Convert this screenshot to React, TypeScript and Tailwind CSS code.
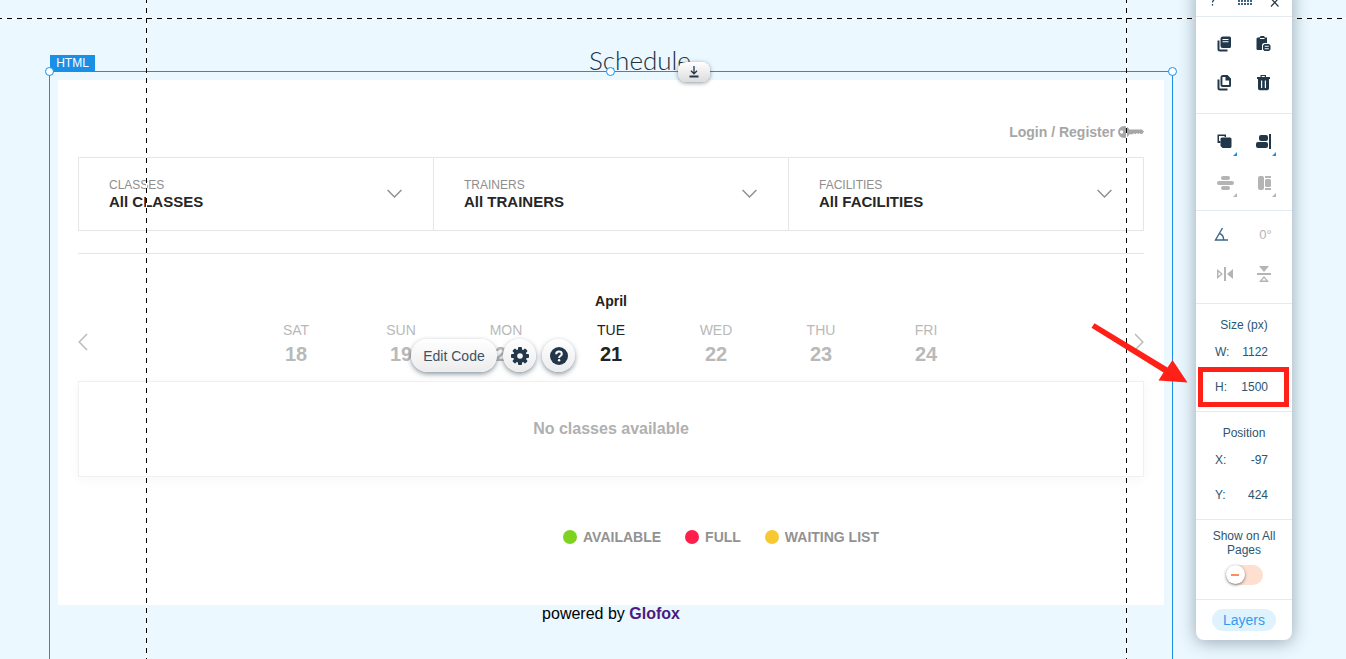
import { useState, type ReactNode } from 'react'

const DAYS = [
  { name: 'SAT', date: 18 },
  { name: 'SUN', date: 19 },
  { name: 'MON', date: 20 },
  { name: 'TUE', date: 21 },
  { name: 'WED', date: 22 },
  { name: 'THU', date: 23 },
  { name: 'FRI', date: 24 },
]

const FILTERS = [
  { id: 'classes', label: 'CLASSES', value: 'All CLASSES' },
  { id: 'trainers', label: 'TRAINERS', value: 'All TRAINERS' },
  { id: 'facilities', label: 'FACILITIES', value: 'All FACILITIES' },
]

const LEGEND = [
  { label: 'AVAILABLE', dot: 'bg-[#7ed321]' },
  { label: 'FULL', dot: 'bg-[#ff1f4b]' },
  { label: 'WAITING LIST', dot: 'bg-[#f8c833]' },
]

function Filter({ id, label, value }: { id: string; label: string; value: string }) {
  return (
    <div className="flex flex-1 items-center border-r border-[#e6e6e6] pl-[30px] pr-[31px] last:border-r-0">
      <div className="flex-1">
        <label htmlFor={id} className="block text-xs leading-4 text-[#8e8e8e]">
          {label}
        </label>
        <select id={id} className="block w-full appearance-none bg-transparent text-[15px] leading-[18px] font-bold text-[#262626]">
          <option>{value}</option>
        </select>
      </div>
      <svg width="15" height="11" viewBox="0 0 15 11" fill="none" stroke="#8e8e8e" strokeWidth="1.4">
        <path d="M.6 1l6.9 7 6.9-7" />
      </svg>
    </div>
  )
}

function Schedule() {
  return (
    <section className="bg-white px-5 pt-[42px] pb-[58px]">
      <a href="#login" className="flex items-center justify-end gap-[3px] text-sm leading-5 font-bold text-[#a6a6a6]">
        Login / Register
        <svg width="26" height="12" viewBox="0 0 26 12" fill="#a6a6a6">
          <path
            fillRule="evenodd"
            d="M6 0c2.400 0 4.400 1.200 5.300 3.500H24L26 5.800 24 8h-1.500l-1-1-1.200 1-1.500-1-1.300 1.200L16 7.200 14.700 8.300h-3.400C10.400 10.700 8.400 12 6 12a6 6 0 0 1 0-12zM3.600 4.300a1.700 1.700 0 1 0 0 3.400 1.700 1.700 0 0 0 0-3.400z"
          />
        </svg>
      </a>

      <div className="mt-[15px] flex h-[74px] border border-[#e6e6e6]">
        {FILTERS.map((f) => (
          <Filter key={f.id} {...f} />
        ))}
      </div>

      <div className="mt-[22px] border-t border-[#e6e6e6] pt-[37px]">
        <h2 className="text-center text-sm leading-5 font-bold text-[#222]">April</h2>
        <div className="mt-[7px] flex items-center justify-between">
          <button type="button" aria-label="Previous week">
            <svg width="10" height="18" viewBox="0 0 10 18" fill="none" stroke="#bdbdbd" strokeWidth="1.6">
              <path d="M9 1L1.200 9 9 17" />
            </svg>
          </button>
          <div className="grid w-[735px] grid-cols-7">
            {DAYS.map((day) => (
              <button
                key={day.name}
                type="button"
                className={day.date === 21 ? 'text-[#222]' : 'text-[#b9b9b9]'}
              >
                <span className="block text-sm leading-6">{day.name}</span>
                <span className="block text-xl leading-6 font-bold">{day.date}</span>
              </button>
            ))}
          </div>
          <button type="button" aria-label="Next week">
            <svg width="10" height="18" viewBox="0 0 10 18" fill="none" stroke="#bdbdbd" strokeWidth="1.6">
              <path d="M1 1l7.800 8L1 17" />
            </svg>
          </button>
        </div>
      </div>

      <p className="mt-[15px] border border-[#f0f0f0] py-[35px] text-center leading-6 font-bold text-[#b0b0b0] shadow-[0_2px_12px_rgba(0,0,0,0.04)]">
        No classes available
      </p>

      <ul className="mt-[50px] flex justify-center gap-6 pl-[220px] text-sm leading-5 font-bold text-[#929292]">
        {LEGEND.map((item) => (
          <li key={item.label} className="flex items-center gap-1.5">
            <span className={`size-3.5 rounded-full ${item.dot}`} />
            {item.label}
          </li>
        ))}
      </ul>
    </section>
  )
}

function FloatingTools() {
  const look =
    'flex h-[33px] items-center justify-center rounded-full bg-linear-to-b from-white to-[#ececec] shadow-[0_2px_5px_rgba(22,45,61,0.5)]'
  return (
    <div className="absolute top-[267px] left-1/2 -ml-[200px] flex gap-1.5 text-[#22384a]">
      <button type="button" className={`${look} w-[86px] text-sm text-[#3f5263]`}>
        Edit Code
      </button>
      <button type="button" aria-label="Settings" className={`${look} w-[33px]`}>
        <svg width="18" height="18" viewBox="-9 -9 18 18" fill="currentColor">
          {[0, 45, 90, 135].map((a) => (
            <rect key={a} x="-2" y="-9" width="4" height="18" rx="1" transform={`rotate(${a})`} />
          ))}
          <circle r="6.800" />
          <circle r="2.800" fill="#f6f6f6" />
        </svg>
      </button>
      <button type="button" aria-label="Help" className={`${look} w-[33px]`}>
        <svg width="18" height="18" viewBox="0 0 18 18" fill="none">
          <circle cx="9" cy="9" r="9" fill="currentColor" />
          <path d="M6.200 7.200C6.200 5.400 7.400 4.500 9 4.500s2.800 1 2.800 2.400c0 1.900-2.700 1.900-2.700 4" stroke="#fff" strokeWidth="2" />
          <circle cx="9.100" cy="13.300" r="1.200" fill="#fff" />
        </svg>
      </button>
    </div>
  )
}

function Handle({ place }: { place: string }) {
  return <span className={`absolute -top-[5px] size-[9px] rounded-full border border-[#1a8fe6] bg-white ${place}`} />
}

function IconButton({ label, children, size, muted, corner }: {
  label: string
  children: ReactNode
  size: string
  muted?: boolean
  corner?: boolean
}) {
  return (
    <button
      type="button"
      aria-label={label}
      className={`relative flex items-center justify-center ${size} ${muted ? 'text-[#b4b4b4]' : 'text-[#22384a]'}`}
    >
      <svg width="18" height="18" viewBox="0 0 18 18" fill="currentColor">
        {children}
      </svg>
      {corner && (
        <svg
          className={`absolute right-[7px] bottom-1.5 ${muted ? 'text-[#b4b4b4]' : 'text-[#1a8fe6]'}`}
          width="4"
          height="4"
          viewBox="0 0 4 4"
          fill="currentColor"
        >
          <path d="M4 0v4H0z" />
        </svg>
      )}
    </button>
  )
}

function Field({ id, label, value, marked }: { id: string; label: string; value: string; marked?: boolean }) {
  return (
    <div className="relative flex h-[35px] items-center justify-between pr-6 pl-[19px]">
      <label htmlFor={id}>{label}</label>
      <input id={id} defaultValue={value} className="w-9 bg-transparent text-right outline-none" />
      {marked && (
        <>
          <span className="pointer-events-none absolute -top-0.5 right-[3px] -bottom-[3px] left-0.5 border-[5px] border-[#ff2018]" />
          <svg
            className="pointer-events-none absolute right-full bottom-5 mr-2"
            width="97"
            height="62"
            viewBox="0 0 97 62"
            fill="#ff2018"
          >
            <path d="M3.500 1.200L.5 5.800 72.500 50.500 67.500 58.500l29 2L81.500 38 76.500 45.500z" />
          </svg>
        </>
      )}
    </div>
  )
}

function Toolbar() {
  const [allPages, setAllPages] = useState(false)
  const group = 'border-t border-[#e4ebf0]'
  return (
    <aside className="relative z-10 -mt-4 mr-[54px] w-24 shrink-0 self-start rounded-b-lg bg-white text-xs text-[#2b5672] shadow-[0_2px_18px_rgba(22,45,61,0.4)]">
      <header className="flex h-8 items-center justify-between px-3">
        <button type="button" aria-label="Help" className="text-[#22384a]">
          <svg width="9" height="12" viewBox="0 0 9 12" fill="none" stroke="currentColor" strokeWidth="1.200">
            <path d="M1.500 3.500C1.500 1.500 3 .8 4.500.8s3 .9 3 2.600c0 2-3 2.400-3 5" />
            <path d="M4.500 10v1.600" />
          </svg>
        </button>
        <svg width="14" height="10" viewBox="0 0 14 10" fill="#3b6787" className="ml-1">
          {[2, 5, 8].map((y) =>
            [0, 3, 6, 9, 12].map((x) => <rect key={`${x}-${y}`} x={x} y={y} width="2" height="2" />)
          )}
        </svg>
        <button type="button" aria-label="Close" className="text-[#22384a]">
          <svg width="11" height="13" viewBox="0 0 11 13" fill="none" stroke="currentColor" strokeWidth="1.200">
            <path d="M2 4.500l7.500 8M9.500 4.500L2 12.500" />
          </svg>
        </button>
      </header>

      <div className={`${group} grid grid-cols-2 px-[9px] pt-[7px] pb-[11px]`}>
        <IconButton label="Copy" size="h-[39px]">
          <path d="M1.500 5.500h2V14.500h8v2H4A2.500 2.500 0 0 1 1.500 14z" />
          <path fillRule="evenodd" d="M7 1.500h6.500A1.500 1.500 0 0 1 15 3v8.500A1.500 1.500 0 0 1 13.500 13H6.500A2 2 0 0 1 4.500 11V4A2.500 2.500 0 0 1 7 1.500zM6.500 4v1h6V4zm0 2.200v1h6v-1z" />
        </IconButton>
        <IconButton label="Paste" size="h-[39px]">
          <path fillRule="evenodd" d="M2.500 2.500h2l1-1.500h3.500l1 1.500h2V8H9.500A2.500 2.500 0 0 0 7 10.500v4.500H2.500A1.200 1.200 0 0 1 1.500 14V3.500zM5 3v1h4.500V3z" />
          <path fillRule="evenodd" d="M9.500 9h4.500l1.500 1.500v4L14 16H9.500L8 14.500v-4zm.2 1.800v1h4.100v-1zm0 2.400v1h4.100v-1z" />
        </IconButton>
        <IconButton label="Duplicate" size="h-[39px]">
          <path d="M1.500 5.500h2V14.500h8v2H4A2.500 2.500 0 0 1 1.500 14z" />
          <path fillRule="evenodd" d="M7 1h4.500L15 4.500v7A1.500 1.500 0 0 1 13.500 13h-7A2 2 0 0 1 4.500 11V3.500A2.500 2.500 0 0 1 7 1zm-.6 2v8h6.700V6.500H9.500V3z" />
        </IconButton>
        <IconButton label="Delete" size="h-[39px]">
          <path fillRule="evenodd" d="M5.500 1h5.500v2h4v2H2V3h3.500zm1.200 1v1h3.100V2zM3 5h11v9.500a1.800 1.800 0 0 1-1.800 1.800H4.800A1.800 1.800 0 0 1 3 14.500zm3 1.500v7.500h1.200V6.500zm3.800 0v7.500H11V6.500z" />
        </IconButton>
      </div>

      <div className={`${group} grid grid-cols-2 px-[9px] py-[7px]`}>
        <IconButton label="Arrange" size="h-[41px]" corner>
          <path fillRule="evenodd" d="M1.500 1.500h8.500V4H8.500V3H3v5h1.500v2h-3z" />
          <path d="M6 4.500h8A1.500 1.500 0 0 1 15.500 6v7.500A1.500 1.500 0 0 1 14 15H6.500L4.500 13V6A1.500 1.500 0 0 1 6 4.500z" />
        </IconButton>
        <IconButton label="Align" size="h-[41px]" corner>
          <rect x="14" y="1" width="2" height="15" />
          <rect x="4" y="2" width="9" height="6" rx="2" />
          <rect x="1" y="9" width="12" height="6" rx="2" />
        </IconButton>
        <IconButton label="Distribute" size="h-[41px]" muted corner>
          <rect x="5" y="2" width="9" height="4" rx="2" />
          <rect x="1" y="7" width="17" height="4" rx="2" />
          <rect x="5" y="12" width="9" height="4" rx="2" />
        </IconButton>
        <IconButton label="Match size" size="h-[41px]" muted corner>
          <rect x="3" y="2" width="6" height="14" rx="2" />
          <rect x="10" y="2" width="6" height="2" />
          <rect x="10" y="5" width="6" height="8" rx="1.500" />
          <rect x="10" y="14" width="6" height="2" />
        </IconButton>
      </div>

      <div className={`${group} grid grid-cols-2 px-[9px] pt-[3px] pb-[9px]`}>
        <label htmlFor="angle" className="flex h-10 items-center justify-center text-[#3b6787]">
          <svg width="18" height="18" viewBox="0 0 18 18" fill="none" stroke="currentColor" strokeWidth="1.400" className="mr-2" aria-label="Angle">
            <path d="M10.500 3L3.500 15H16M7.300 8.500c2.800.9 4.400 3.300 4.400 6.500" />
          </svg>
        </label>
        <input id="angle" defaultValue="0°" className="h-10 w-full bg-transparent pl-1 text-center text-[13px] text-[#b4b4b4] outline-none" />
        <IconButton label="Flip horizontally" size="h-10" muted>
          <path fillRule="evenodd" d="M1 4l6 5-6 5zm1.500 3v4L5 9z" />
          <rect x="8" y="2" width="2" height="14" />
          <path d="M17 4v10l-6-5z" />
        </IconButton>
        <IconButton label="Flip vertically" size="h-10" muted>
          <rect x="2" y="8" width="14" height="2" />
          <path d="M4 1h10L9 7z" />
          <path fillRule="evenodd" d="M4 17l5-6 5 6zm3-1.500h4L9 13z" />
        </IconButton>
      </div>

      <fieldset className={`${group} pt-[11px] pb-[7px]`}>
        <legend className="float-left h-[19px] w-full text-center leading-5">Size (px)</legend>
        <div className="clear-both">
          <Field id="width" label="W:" value="1122" />
          <Field id="height" label="H:" value="1500" marked />
        </div>
      </fieldset>

      <fieldset className={`${group} pt-[11px] pb-[7px]`}>
        <legend className="float-left h-[19px] w-full text-center leading-5">Position</legend>
        <div className="clear-both">
          <Field id="pos-x" label="X:" value="-97" />
          <Field id="pos-y" label="Y:" value="424" />
        </div>
      </fieldset>

      <label className={`${group} flex flex-col items-center px-3 pt-[9px] pb-[14px] text-center leading-[14px]`}>
        Show on All Pages
        <input
          type="checkbox"
          className="peer sr-only"
          checked={allPages}
          onChange={(e) => setAllPages(e.target.checked)}
        />
        <span className="mt-2 flex h-5 w-[37px] rounded-full bg-[#ffdfd0] peer-checked:justify-end peer-checked:bg-[#c1e4fe]">
          <span className="flex size-[19px] items-center justify-center rounded-full bg-white shadow-[0_1px_3px_rgba(22,45,61,0.6)]">
            <span className="h-0.5 w-2 bg-[#fb8d62]" />
          </span>
        </span>
      </label>

      <div className={`${group} flex justify-center py-[9px]`}>
        <button type="button" className="h-[22px] w-16 rounded-full bg-[#dff3ff] text-sm leading-[22px] text-[#3899ec]">
          Layers
        </button>
      </div>
    </aside>
  )
}

export default function App() {
  return (
    <div className="relative flex min-h-screen overflow-hidden bg-[#ebf8ff] font-['Liberation_Sans',Arial,sans-serif]">
      <main className="mr-[23px] ml-[49px] flex min-w-0 flex-1 flex-col">
        <header className="h-[71px] pt-[42px] pl-[58px]">
          <h1 className="text-center font-[Lato,sans-serif] text-[26px] leading-9 font-light text-[#20303c]">Schedule</h1>
        </header>

        <div className="relative flex-1 border-x border-t border-[#1a8fe6] px-2 pt-2">
          <span className="absolute -top-[17px] left-0 h-4 w-[45px] bg-[#1a8fe6] text-center text-xs leading-4 text-white">
            HTML
          </span>
          <Schedule />
          <p className="text-center leading-[18px] text-black">
            powered by{' '}
            <a href="#glofox" className="font-bold text-[#4b1a82]">
              Glofox
            </a>
          </p>
          <Handle place="-left-[5px]" />
          <Handle place="left-1/2 -ml-[5px]" />
          <Handle place="-right-[5px]" />
          <button
            type="button"
            aria-label="Attach"
            className="absolute -top-[10px] left-1/2 ml-[67px] flex h-5 w-8 items-center justify-center rounded-lg bg-linear-to-b from-white to-[#dcdcdc] shadow-[0_1px_4px_rgba(22,45,61,0.5)]"
          >
            <svg width="10" height="12" viewBox="0 0 10 12" fill="none" stroke="#22384a" strokeWidth="1.300">
              <path d="M5 0v7.500M2 4.800l3 3 3-3" />
              <path d="M.5 10.500h9" strokeWidth="2" />
            </svg>
          </button>
          <FloatingTools />
        </div>
      </main>

      {/* page guides */}
      <div className="pointer-events-none absolute inset-x-0 top-[18px] h-px bg-[repeating-linear-gradient(90deg,#000_0_2px,#fff_2px_7px,#000_7px_10px)]" />
      <div className="pointer-events-none absolute inset-y-0 left-[146px] w-px bg-[repeating-linear-gradient(180deg,#000_0_3px,#fff_3px_8px,#000_8px_10px)]" />
      <div className="pointer-events-none absolute inset-y-0 right-[219px] w-px bg-[repeating-linear-gradient(180deg,#000_0_3px,#fff_3px_8px,#000_8px_10px)]" />

      <Toolbar />
    </div>
  )
}
